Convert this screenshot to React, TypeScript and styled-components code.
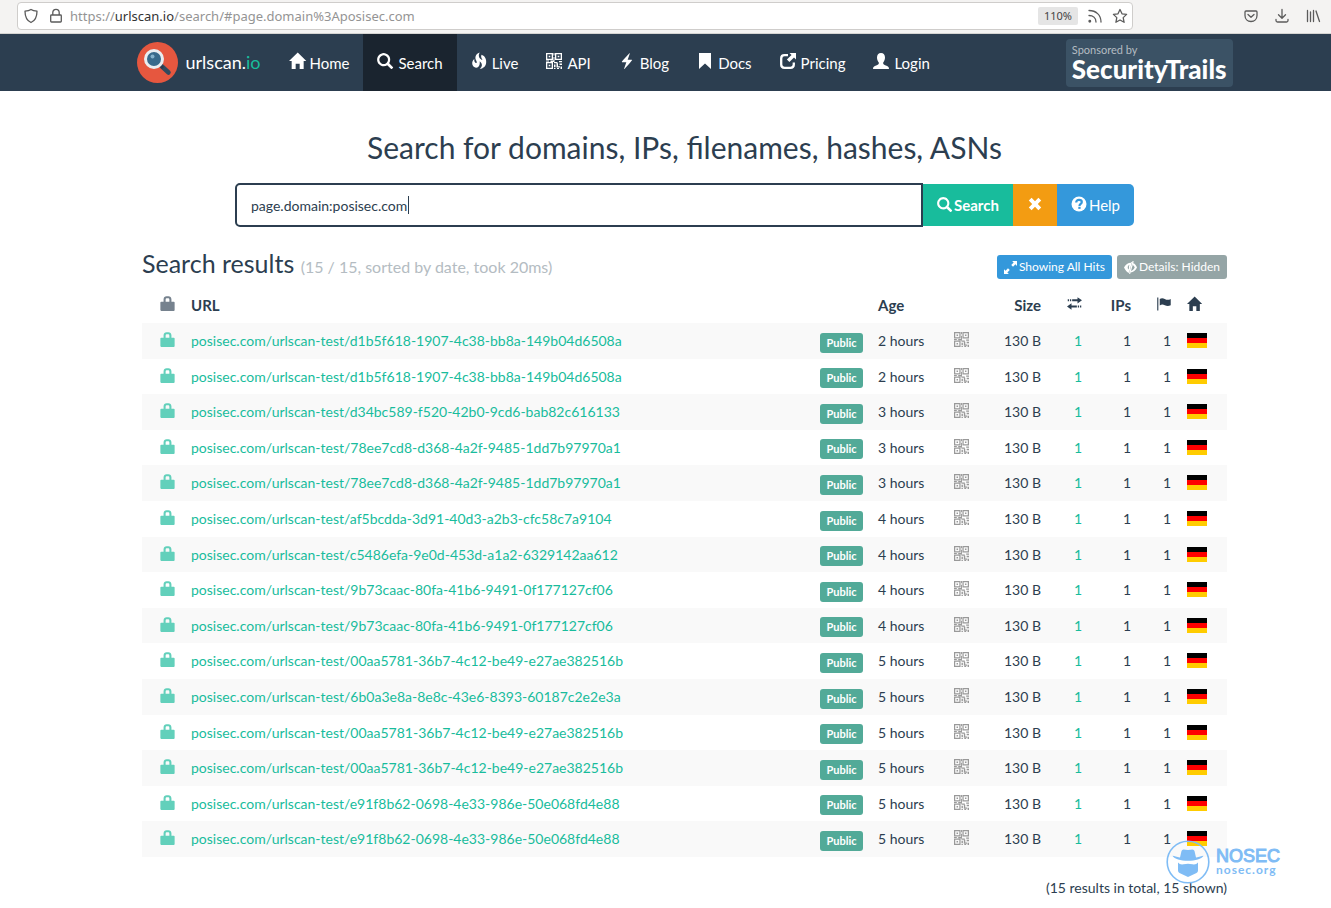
import React, { useState } from "react";
import styled, { createGlobalStyle } from "styled-components";

const GlobalStyle = createGlobalStyle`
  * { box-sizing: border-box; }
  body {
    margin: 0;
    background: #fff;
    color: #2c3e50;
    font: 14px/20px Lato, "Liberation Sans", sans-serif;
  }
  button, input { font: inherit; }
  a { text-decoration: none; }
`;

/* ---------- icons ---------- */

const Svg = styled.svg<{ $size?: number }>`
  display: block;
  flex: none;
  overflow: visible;
  width: ${(p) => p.$size ?? 16}px;
  height: ${(p) => p.$size ?? 16}px;
  fill: currentColor;
`;

type IconName =
  | "home" | "search" | "fire" | "qrcode" | "flash" | "bookmark" | "share" | "user"
  | "remove" | "question" | "resize" | "eyeClose" | "lock" | "transfer" | "flag";

const fontGlyphs: Partial<Record<IconName, string>> = {
  home: "M18 618l620 608q8 7 18.5 7t17.5 -7l608 -608q8 -8 5.5 -13t-12.5 -5h-175v-575q0 -10 -7.5 -17.5t-17.5 -7.5h-250q-10 0 -17.5 7.5t-7.5 17.5v375h-300v-375q0 -10 -7.5 -17.5t-17.5 -7.5h-250q-10 0 -17.5 7.5t-7.5 17.5v575h-175q-10 0 -12.5 5t5.500 13z",
  search: "M500 1191q100 0 191 -39t156.5 -104.5t104.5 -156.5t39 -191l-1 -2l1 -5q0 -141 -78 -262l275 -274q23 -26 22.5 -44.5t-22.5 -42.5l-59 -58q-26 -20 -46.5 -20t-39.5 20l-275 274q-119 -77 -261 -77l-5 1l-2 -1q-100 0 -191 39t-156.5 104.5t-104.5 156.5t-39 191t39 191t104.5 156.5t156.5 104.5t191 39zM500 1022q-88 0 -162 -43t-117 -117t-43 -162t43 -162t117 -117t162 -43t162 43t117 117t43 162t-43 162t-117 117t-162 43z",
  fire: "M653 1231q-39 -67 -54.5 -131t-10.5 -114.5t24.5 -96.5t47.5 -80t63.5 -62.5t68.5 -46.5t65 -30q-4 7 -17.5 35t-18.5 39.5t-17 39.5t-17 43t-13 42t-9.5 44.5t-2 42t4 43t13.5 39t23 38.5q96 -42 165 -107.5t105 -138t52 -156t13 -159t-19 -149.5q-13 -55 -44 -106.5t-68 -87t-78.5 -64.5t-72.5 -45t-53 -22q-72 -22 -127 -11q-31 6 -13 19q6 3 17 7q13 5 32.5 21t41 44t38.5 63.5t21.5 81.5t-6.5 94.5t-50 107t-104 115.5q10 -104 -0.5 -189t-37 -140.5t-65 -93t-84 -52t-93.5 -11t-95 24.5q-80 36 -131.5 114t-53.5 171q-2 23 0 49.5t4.5 52.5t13.5 56t27.5 60t46 64.5t69.5 68.5q-8 -53 -5 -102.5t17.5 -90t34 -68.5t44.5 -39t49 -2q31 13 38.5 36t-4.5 55t-29 64.5t-36 75t-26 75.5q-15 85 2 161.5t53.5 128.5t85.5 92.5t93.5 61t81.5 25.5z",
  flash: "M793 1182l9 -9q8 -10 5 -27q-3 -11 -79 -225.5t-78 -221.5l300 1q24 0 32.5 -17.5t-5.5 -35.5q-1 0 -133.5 -155t-267 -312.5t-138.5 -162.5q-12 -15 -26 -15h-9l-9 8q-9 11 -4 32q2 9 42 123.5t79 224.5l39 110h-302q-23 0 -31 19q-10 21 6 41q75 86 209.5 237.5t228 257t98.5 111.5q9 16 25 16h9z",
};

const drawnGlyphs: Partial<Record<IconName, React.ReactNode>> = {
  qrcode: (
    <>
      <path fillRule="evenodd" d="M0 0h7v7H0zM1.3 1.3v4.4h4.4V1.3zM9 0h7v7H9zM10.3 1.3v4.4h4.4V1.3zM0 9h7v7H0zM1.3 10.3v4.4h4.4v-4.4z" />
      <path d="M2.7 2.7h1.6v1.6H2.7zM11.7 2.7h1.6v1.6h-1.6zM2.7 11.7h1.6v1.6H2.7zM7.5 0h1v2.500h-1zM7.500 4h1v3.500h-1zM0 7.500h3v1H0zM4.500 7.500h4v1.500h-4zM8 9h3.500v1.300H8zM13 8h3v1.300h-3zM8 11.500h1.500V14H8zM10.500 10.300h1.500v3h2v1.300h-3.500zM13.500 10.500H16V12h-2.500zM8 14.800h1.500V16H8zM11 15h2v1h-2zM14.500 13.500H16V16h-1.500z" />
    </>
  ),
  bookmark: <path d="M2 0h12v16l-6-5.500L2 16z" />,
  share: (
    <>
      <path fill="none" stroke="currentColor" strokeWidth="2.3" d="M8 2.200H4.500Q1.200 2.200 1.200 5.500v6Q1.200 14.800 4.500 14.800h6Q13.800 14.800 13.800 11.500V9.500" />
      <path d="M9.500 0H16v6.500l-2-2-4.600 4.600-2.500-2.500L11.500 2z" />
    </>
  ),
  user: <path d="M8 0c2.600 0 4 1.900 4 4.500 0 2-.8 3.900-1.800 5v1.100c0 .9 1 1.300 2.600 2 2 .8 3.200 1.300 3.200 3.400H0c0-2.100 1.200-2.600 3.200-3.400 1.600-.7 2.600-1.100 2.600-2V9.500C4.800 8.400 4 6.500 4 4.500 4 1.900 5.400 0 8 0z" />,
  remove: <path d="M4.600 1.800 8 5.200l3.400-3.400 2.800 2.800L10.800 8l3.400 3.400-2.800 2.800L8 10.800l-3.400 3.400-2.800-2.800L5.200 8 1.800 4.600z" />,
  question: (
    <>
      <circle cx="8" cy="8" r="7.5" />
      <path fill="none" stroke="#3498db" strokeWidth="2.2" d="M5.200 6.400C5.200 4.700 6.300 3.900 8 3.900s2.800.9 2.800 2.200c0 1.900-2.300 1.800-2.300 3.800" />
      <path fill="#3498db" d="M7.300 10.800h2.300v2.100H7.300z" />
    </>
  ),
  resize: <path d="M10 0h6v6l-1.900-1.900-3 3-2.200-2.200 3-3zM0 10l1.900 1.900 3-3 2.200 2.200-3 3L6 16H0z" />,
  eyeClose: (
    <>
      <path fillRule="evenodd" d="M9.800 1.300 6.200 14.700C3.600 13.700 1.500 11.300 0 8c2-3.800 5-6 8.500-6l.2-.7zM7 4.700C5.300 5.200 4.600 6.500 4.600 8c0 1 .4 1.900 1 2.600l.6-2.200C5.800 7.200 6 6 7 4.700z" />
      <path d="M11.500 2.600C13.400 3.700 15 5.600 16 8c-1.700 3.700-4.500 5.700-8 6l.5-1.800c2-.4 3.500-1.800 4.700-4.200-.6-1.400-1.300-2.300-2.300-3.100z" />
      <path d="M10.500 0 12 .4 7.600 16l-1.500-.4z" />
    </>
  ),
  lock: <path fillRule="evenodd" d="M3.800 6V3.800C3.800 1.500 5.200.3 7 .3h2c1.800 0 3.200 1.200 3.200 3.500V6h2.500c.6 0 .9.400.9.900V15c0 .6-.4.900-.9.900H1.300c-.6 0-.9-.4-.9-.9V6.900c0-.6.4-.9.900-.9zm2.200 0h4V4c0-1.100-.6-1.600-1.400-1.600H7.400C6.600 2.400 6 2.900 6 4z" />,
  transfer: <path d="M11.200 1.200 16 4.600l-4.800 3.400V5.700H5.500V3.500h5.700zM.8 3.500h1.300v2.200H.8zM3.100 3.500h1.400v2.200H3.100zM4.800 7.800v2.300h5.700v2.200H4.800v2.300L0 11.200zM11.500 10.100h1.400v2.200h-1.400zM13.900 10.100h1.300v2.200h-1.300z" />,
  flag: <path d="M1.300 1.500h1.200v14H1.300zM4 3.200C5.800 2 7.400 2 9.400 3.200s4 1.200 6.300 0v6.600c-2.300 1.200-4.300 1-6.300 0s-3.500-1-5.400.2z" />,
};

function Icon({ name, size }: { name: IconName; size?: number }) {
  const glyph = fontGlyphs[name];
  return glyph ? (
    <Svg viewBox="0 0 1200 1200" $size={size} aria-hidden="true">
      <path transform="translate(0 1200) scale(1 -1)" d={glyph} />
    </Svg>
  ) : (
    <Svg viewBox="0 0 16 16" $size={size} aria-hidden="true">{drawnGlyphs[name]}</Svg>
  );
}

/* ---------- browser toolbar ---------- */

const BrowserBar = styled.div`
  display: flex;
  align-items: center;
  height: 34px;
  padding: 0 6px 2px 17px;
  background: #f4f3f2;
  border-bottom: 1px solid #d5d4d2;
  color: #555;
`;

const AddressBox = styled.div`
  display: flex;
  flex: 1;
  align-items: center;
  height: 28px;
  margin-right: 105px;
  background: #fff;
  border: 1px solid #cfcdcb;
  border-radius: 4px;
`;

const ToolButton = styled.button`
  display: flex;
  flex: none;
  align-items: center;
  justify-content: center;
  width: 25px;
  height: 24px;
  padding: 0;
  border: 0;
  background: none;
  color: inherit;
`;

const LineSvg = styled.svg`
  width: 16px;
  height: 16px;
  fill: none;
  stroke: #5b5b5b;
  stroke-width: 1.3;
  stroke-linecap: round;
  stroke-linejoin: round;
`;

const Address = styled.span`
  flex: 1;
  margin-left: 2px;
  color: #949494;
  font: 13px/20px "Noto Sans", sans-serif;
  white-space: nowrap;
`;

const Domain = styled.span`
  color: #333;
`;

const Zoom = styled.button`
  height: 18px;
  margin-right: 4px;
  padding: 0 6px;
  border: 0;
  border-radius: 2px;
  background: #e5e5e5;
  color: #444;
  font: 11px/18px "Noto Sans", sans-serif;
`;

const Tools = styled.div`
  display: flex;
  gap: 6px;
`;

/* ---------- site navigation ---------- */

const Navbar = styled.header`
  padding-left: 38px;
  background: #2c3e50;
`;

const NavInner = styled.div`
  display: flex;
  align-items: center;
  max-width: 1096px;
  height: 57px;
  margin: 0 auto;
`;

const Brand = styled.a`
  display: flex;
  align-items: center;
  gap: 8px;
  margin-right: 14px;
  padding-bottom: 1px;
  color: #fff;
  font-size: 18px;
`;

const BrandTld = styled.span`
  color: #18bc9c;
`;

const NavList = styled.nav`
  display: flex;
  flex: 1;
  height: 100%;
`;

const NavLink = styled.a<{ $active?: boolean }>`
  display: flex;
  align-items: center;
  gap: 5px;
  padding: 0 14px;
  background: ${(p) => (p.$active ? "#1a242f" : "transparent")};
  color: #fff;
  font-size: 15px;

  svg { margin-bottom: 3px; }
`;

const Sponsor = styled.a`
  display: flex;
  flex-direction: column;
  height: 48px;
  padding: 4px 6px;
  border-radius: 4px;
  background: #3b5265;
  color: #fff;
`;

const SponsorNote = styled.span`
  color: #b4bcc2;
  font-size: 11px;
  line-height: 14px;
`;

const SponsorName = styled.span`
  font-size: 26px;
  font-weight: 900;
  line-height: 24px;
`;

/* ---------- search ---------- */

const Page = styled.main`
  padding-left: 38px;
`;

const Container = styled.div`
  max-width: 1085px;
  margin: 0 auto;
`;

const Title = styled.h1`
  margin: 0;
  padding: 36px 0 16px;
  font-size: 30px;
  font-weight: 400;
  line-height: 40px;
  text-align: center;
`;

const SearchForm = styled.form`
  display: flex;
  align-items: center;
  max-width: 899px;
  margin: 0 auto;
`;

const QueryField = styled.div`
  position: relative;
  flex: 1;
`;

const QueryInput = styled.input`
  display: block;
  width: 100%;
  height: 44px;
  padding: 0 14px;
  border: 2px solid #2c3e50;
  border-radius: 5px 0 0 5px;
  outline: 0;
  background: #fff;
  color: #2c3e50;
`;

const Caret = styled.span`
  position: absolute;
  top: 13px;
  left: 173px;
  width: 1px;
  height: 18px;
  background: #2c3e50;
`;

const FormButton = styled.button<{ $color: string; $bold?: boolean }>`
  display: flex;
  align-items: center;
  gap: 2px;
  height: 42px;
  padding: 0 14px;
  border: 0;
  background: ${(p) => p.$color};
  color: #fff;
  font-size: 15px;
  font-weight: ${(p) => (p.$bold ? 700 : 400)};

  &:last-child { border-radius: 0 5px 5px 0; }
  svg { margin-bottom: 2px; }
`;

/* ---------- results ---------- */

const ResultsHeader = styled.div`
  display: flex;
  align-items: center;
  gap: 5px;
  padding: 19px 0 3px;
`;

const ResultsTitle = styled.h2`
  flex: 1;
  margin: 0;
  font-size: 25px;
  font-weight: 400;
  line-height: 34px;
`;

const Muted = styled.small`
  color: #b4bcc2;
  font-size: 16px;
`;

const SmallButton = styled.button<{ $color: string }>`
  display: flex;
  align-items: center;
  gap: 2px;
  height: 24px;
  margin-top: 4px;
  padding: 0 7px;
  border: 0;
  border-radius: 3px;
  background: ${(p) => p.$color};
  color: #fff;
  font-size: 12px;
`;

const Table = styled.table`
  width: 100%;
  table-layout: fixed;
  border-collapse: collapse;
`;

const Col = styled.col<{ $width?: number }>`
  width: ${(p) => (p.$width ? `${p.$width}px` : "auto")};
`;

const HeadCell = styled.th<{ $right?: boolean }>`
  height: 36px;
  padding: 0 8px;
  font-size: 15px;
  text-align: ${(p) => (p.$right ? "right" : "left")};
`;

const Row = styled.tr`
  height: 36px;

  &:nth-child(odd) { background: #f9f9f9; }
  &:nth-child(5n + 2), &:nth-child(5n + 4) { height: 35px; }
`;

const Cell = styled.td<{ $right?: boolean }>`
  padding: 0 8px;
  text-align: ${(p) => (p.$right ? "right" : "left")};
  white-space: nowrap;
`;

const IconSlot = styled.span<{ $color?: string; $align?: string }>`
  display: flex;
  justify-content: ${(p) => p.$align ?? "flex-start"};
  padding-bottom: 3px;
  color: ${(p) => p.$color ?? "inherit"};
`;

const ResultLink = styled.a`
  color: #18bc9c;
`;

const Badge = styled.span`
  display: block;
  width: 43px;
  height: 20px;
  margin-top: 3px;
  border-radius: 3px;
  background: #52aa98;
  color: #fff;
  font-size: 11px;
  font-weight: 700;
  text-align: center;
`;

const Flag = styled.svg`
  display: block;
  width: 20px;
  height: 15px;
  margin-bottom: 1px;
`;

const Footer = styled.footer`
  position: relative;
  padding: 21px 0 10px;
  text-align: right;
`;

const Watermark = styled.div`
  position: absolute;
  top: -17px;
  right: -53px;
  display: flex;
  align-items: center;
  gap: 6px;
  color: #7fbcf5;
  text-align: left;
`;

const WatermarkName = styled.div`
  font: 18px/16px "Liberation Sans", sans-serif;
  -webkit-text-stroke: 1px currentColor;
`;

const WatermarkSite = styled.div`
  font: 700 12px/12px Lato, sans-serif;
  letter-spacing: 1px;
`;

const nav: { icon: IconName; label: string; active?: boolean }[] = [
  { icon: "home", label: "Home" },
  { icon: "search", label: "Search", active: true },
  { icon: "fire", label: "Live" },
  { icon: "qrcode", label: "API" },
  { icon: "flash", label: "Blog" },
  { icon: "bookmark", label: "Docs" },
  { icon: "share", label: "Pricing" },
  { icon: "user", label: "Login" },
];

const results: [string, number][] = [
  ["d1b5f618-1907-4c38-bb8a-149b04d6508a", 2],
  ["d1b5f618-1907-4c38-bb8a-149b04d6508a", 2],
  ["d34bc589-f520-42b0-9cd6-bab82c616133", 3],
  ["78ee7cd8-d368-4a2f-9485-1dd7b97970a1", 3],
  ["78ee7cd8-d368-4a2f-9485-1dd7b97970a1", 3],
  ["af5bcdda-3d91-40d3-a2b3-cfc58c7a9104", 4],
  ["c5486efa-9e0d-453d-a1a2-6329142aa612", 4],
  ["9b73caac-80fa-41b6-9491-0f177127cf06", 4],
  ["9b73caac-80fa-41b6-9491-0f177127cf06", 4],
  ["00aa5781-36b7-4c12-be49-e27ae382516b", 5],
  ["6b0a3e8a-8e8c-43e6-8393-60187c2e2e3a", 5],
  ["00aa5781-36b7-4c12-be49-e27ae382516b", 5],
  ["00aa5781-36b7-4c12-be49-e27ae382516b", 5],
  ["e91f8b62-0698-4e33-986e-50e068fd4e88", 5],
  ["e91f8b62-0698-4e33-986e-50e068fd4e88", 5],
];

function BrandLogo() {
  return (
    <svg width="41" height="41" viewBox="0 0 41 41" aria-hidden="true">
      <circle cx="20.5" cy="20.5" r="20.5" fill="#e6573f" />
      <path d="M25 24.500l6.500 6" stroke="#324a5e" strokeWidth="4.5" strokeLinecap="round" />
      <path d="M22.500 22.500l3.500 3.500" stroke="#2b3b4e" strokeWidth="3" />
      <circle cx="17" cy="17" r="8.5" fill="#386a8b" stroke="#e9edf0" strokeWidth="3" />
      <circle cx="15.5" cy="14.5" r="2" fill="#84b1cb" />
    </svg>
  );
}

function BrowserToolbar() {
  return (
    <BrowserBar>
      <AddressBox>
        <ToolButton type="button" aria-label="Tracking protection">
          <LineSvg viewBox="0 0 16 16"><path d="M8 1.500c1.500 1 3.500 1.500 6 1.700 0 5-1.500 9.300-6 11.300C3.500 12.500 2 8.200 2 3.200c2.500-.2 4.500-.7 6-1.700z" /></LineSvg>
        </ToolButton>
        <ToolButton type="button" aria-label="Connection secure">
          <LineSvg viewBox="0 0 16 16"><path d="M4.800 7V4.500a3.200 3.200 0 0 1 6.400 0V7M3.500 7h9q.8 0 .8.800v5.400q0 .8-.8.800h-9q-.8 0-.8-.8V7.800q0-.8.800-.8z" /></LineSvg>
        </ToolButton>
        <Address>https://<Domain>urlscan.io</Domain>/search/#page.domain%3Aposisec.com</Address>
        <Zoom type="button">110%</Zoom>
        <ToolButton type="button" aria-label="Subscribe">
          <LineSvg viewBox="0 0 16 16"><path d="M2 2.500c7 0 12 4.500 12 11.500M2 7.500c4 0 7 2.500 7 6.500" /><circle cx="2.8" cy="13.2" r=".8" fill="#5b5b5b" /></LineSvg>
        </ToolButton>
        <ToolButton type="button" aria-label="Bookmark this page">
          <LineSvg viewBox="0 0 16 16"><path d="M8 1.500l2 4.300 4.600.6-3.400 3.200.9 4.700L8 12l-4.100 2.300.9-4.700L1.400 6.400 6 5.800z" /></LineSvg>
        </ToolButton>
      </AddressBox>
      <Tools>
        <ToolButton type="button" aria-label="Save to Pocket">
          <LineSvg viewBox="0 0 16 16"><path d="M3 3h10q1 0 1 1v3.500c0 3.500-2.500 6-6 6s-6-2.500-6-6V4q0-1 1-1zM5 6.500l3 2.800 3-2.800" /></LineSvg>
        </ToolButton>
        <ToolButton type="button" aria-label="Downloads">
          <LineSvg viewBox="0 0 16 16"><path d="M8 1.500v8.500M4.500 6.800L8 10.200l3.500-3.400M2 11.500v1q0 1.500 1.500 1.500h9q1.500 0 1.500-1.500v-1" /></LineSvg>
        </ToolButton>
        <ToolButton type="button" aria-label="Library">
          <LineSvg viewBox="0 0 16 16"><path d="M2.500 2.500v11M5.500 4v9.500M8.500 2.500v11M11 3l3.500 10.500" /></LineSvg>
        </ToolButton>
      </Tools>
    </BrowserBar>
  );
}

function GermanFlag() {
  return (
    <Flag viewBox="0 0 20 15" role="img" aria-label="Germany">
      <path d="M0 0h20v5H0z" fill="#000" />
      <path d="M0 5h20v5H0z" fill="#f00" />
      <path d="M0 10h20v5H0z" fill="#fc0" />
    </Flag>
  );
}

function NosecMark() {
  return (
    <Watermark>
      <svg width="44" height="44" viewBox="0 0 44 44" aria-hidden="true">
        <circle cx="22" cy="22" r="20.8" fill="none" stroke="currentColor" strokeWidth="1.6" />
        <path fill="currentColor" d="M14 17.500l1.500-6.500q.5-1.500 2-1.500 2 0 4.500.5 2.500-.5 4.500-.5 1.500 0 2 1.500l1.500 6.500c3.500-.6 5.500-1.500 7.500-1.800-2 3.300-8 5-15.500 5s-13.500-1.700-15.500-5c2 .3 4 1.200 7.500 1.800z" />
        <path fill="currentColor" d="M12 22.500q2 2.500 5.500 1.800 2.500-.5 4.500-.5t4.500.5q3.500.7 5.500-1.800v8q0 1.500-1.500 2.500L22 37l-8.500-4q-1.500-1-1.500-2.500z" />
      </svg>
      <div>
        <WatermarkName>NOSEC</WatermarkName>
        <WatermarkSite>nosec.org</WatermarkSite>
      </div>
    </Watermark>
  );
}

export default function App() {
  const [query, setQuery] = useState("page.domain:posisec.com");
  return (
    <>
      <GlobalStyle />
      <BrowserToolbar />
      <Navbar>
        <NavInner>
          <Brand href="#home">
            <BrandLogo />
            <span>urlscan.<BrandTld>io</BrandTld></span>
          </Brand>
          <NavList>
            {nav.map((n) => (
              <NavLink key={n.label} href={`#${n.label}`} $active={n.active}>
                <Icon name={n.icon} />
                {n.label}
              </NavLink>
            ))}
          </NavList>
          <Sponsor href="#sponsor">
            <SponsorNote>Sponsored by</SponsorNote>
            <SponsorName>SecurityTrails</SponsorName>
          </Sponsor>
        </NavInner>
      </Navbar>
      <Page>
        <Container>
          <Title>Search for domains, IPs, filenames, hashes, ASNs</Title>
          <SearchForm onSubmit={(e) => e.preventDefault()}>
            <QueryField>
              <QueryInput aria-label="Search query" value={query} onChange={(e) => setQuery(e.target.value)} />
              <Caret />
            </QueryField>
            <FormButton type="submit" $color="#18bc9c" $bold><Icon name="search" size={15} />Search</FormButton>
            <FormButton type="button" $color="#f39c12" aria-label="Clear" onClick={() => setQuery("")}><Icon name="remove" size={16} /></FormButton>
            <FormButton type="button" $color="#3498db"><Icon name="question" size={16} />Help</FormButton>
          </SearchForm>
          <ResultsHeader>
            <ResultsTitle>Search results <Muted>(15 / 15, sorted by date, took 20ms)</Muted></ResultsTitle>
            <SmallButton type="button" $color="#3498db"><Icon name="resize" size={13} />Showing All Hits</SmallButton>
            <SmallButton type="button" $color="#95a5a6"><Icon name="eyeClose" size={13} />Details: Hidden</SmallButton>
          </ResultsHeader>
          <Table>
            <colgroup>
              <Col $width={41} /><Col /><Col $width={58} /><Col $width={76} /><Col $width={40} />
              <Col $width={63} /><Col $width={41} /><Col $width={49} /><Col $width={40} /><Col $width={48} />
            </colgroup>
            <thead>
              <tr>
                <HeadCell><IconSlot $color="#76828e" $align="flex-end"><Icon name="lock" size={15} /></IconSlot></HeadCell>
                <HeadCell>URL</HeadCell>
                <HeadCell />
                <HeadCell>Age</HeadCell>
                <HeadCell />
                <HeadCell $right>Size</HeadCell>
                <HeadCell><IconSlot $align="flex-end"><Icon name="transfer" size={15} /></IconSlot></HeadCell>
                <HeadCell $right>IPs</HeadCell>
                <HeadCell><IconSlot $align="flex-end"><Icon name="flag" size={15} /></IconSlot></HeadCell>
                <HeadCell><IconSlot><Icon name="home" size={14} /></IconSlot></HeadCell>
              </tr>
            </thead>
            <tbody>
              {results.map(([id, hours], i) => (
                <Row key={i}>
                  <Cell><IconSlot $color="#62d0bb" $align="flex-end"><Icon name="lock" size={15} /></IconSlot></Cell>
                  <Cell><ResultLink href={`#${id}`}>posisec.com/urlscan-test/{id}</ResultLink></Cell>
                  <Cell><Badge>Public</Badge></Cell>
                  <Cell>{hours} hours</Cell>
                  <Cell><IconSlot $color="#999"><Icon name="qrcode" size={15} /></IconSlot></Cell>
                  <Cell $right>130 B</Cell>
                  <Cell $right><ResultLink as="span">1</ResultLink></Cell>
                  <Cell $right>1</Cell>
                  <Cell $right>1</Cell>
                  <Cell><GermanFlag /></Cell>
                </Row>
              ))}
            </tbody>
          </Table>
          <Footer>
            (15 results in total, 15 shown)
            <NosecMark />
          </Footer>
        </Container>
      </Page>
    </>
  );
}
